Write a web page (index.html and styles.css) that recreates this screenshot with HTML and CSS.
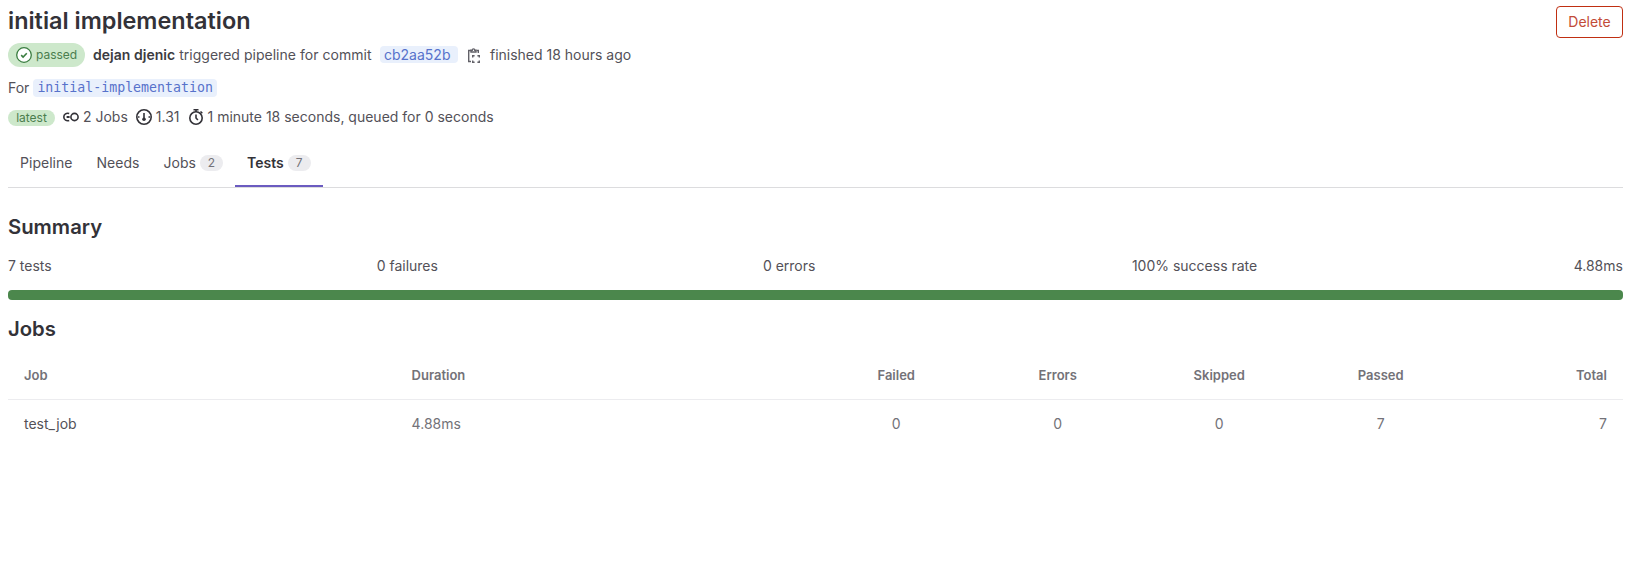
FILE: index.html
```html
<!DOCTYPE html>
<html lang="en">
<head>
<meta charset="utf-8">
<title>initial implementation</title>
<link rel="stylesheet" href="styles.css">
</head>
<body>
<header class="header">
  <h1 class="title">initial implementation</h1>
  <button class="delete">Delete</button>
</header>
<div class="commit-row">
  <span class="status">
    <svg width="16" height="16" viewBox="0 0 16 16" fill="none" stroke="currentColor"><circle cx="8" cy="8" r="7.3" fill="#fff" stroke-width="1.3"/><path d="M5.200 8.100l1.900 1.900 3.700-3.700" stroke-width="1.600"/></svg>
    <span>passed</span>
  </span>
  <span class="trigger"><strong>dejan djenic</strong> triggered pipeline for commit</span>
  <span class="sha">cb2aa52b</span>
  <svg class="copy" width="16" height="18" viewBox="0 0 16 18" fill="none" stroke="currentColor" stroke-width="1.400"><path d="M4 3.500H1.700v11H4M9.500 3.500h1.800V6"/><path d="M4 5V3.200h1.200a1.300 1.300 0 0 1 2.600 0H9V5z"/><path d="M5.700 10.500V8.700h1.900M10.400 8.700h1.900v1.800M12.300 13.500v1.800h-1.900M7.600 15.300H5.700v-1.800"/></svg>
  <span class="finished">finished 18 hours ago</span>
</div>
<div class="ref-row"><span>For</span><code class="ref">initial-implementation</code></div>
<div class="meta-row">
  <span class="latest">latest</span>
  <span class="meta jobs"><svg width="16" height="16" viewBox="0 0 16 16" fill="none" stroke="currentColor" stroke-width="1.600"><circle cx="11.500" cy="8" r="3.600"/><path d="M6.200 4.600C3.500 3.700.800 5.200.800 8s2.700 4.300 5.400 3.400"/><path d="M3.600 8h3" stroke-width="2"/></svg><span>2 Jobs</span></span>
  <span class="meta usage"><svg width="16" height="16" viewBox="0 0 16 16" fill="none" stroke="currentColor" stroke-width="1.600"><circle cx="8" cy="8" r="7.200"/><path d="M8 4v6M2 8h1.500M12.500 8H14"/><circle cx="8" cy="10.300" r="1.800" fill="currentColor" stroke="none"/></svg><span>1.31</span></span>
  <span class="meta time"><svg width="16" height="16" viewBox="0 0 16 16" fill="none" stroke="currentColor" stroke-width="1.600"><circle cx="8" cy="9" r="6.200"/><path d="M5.500.800h5M8 1v2M8 5.500V9l1.900 2M12.500 2.500l1.800 1.800"/></svg><span>1 minute 18 seconds, queued for 0 seconds</span></span>
</div>
<nav class="tabs">
  <a class="tab">Pipeline</a>
  <a class="tab">Needs</a>
  <a class="tab">Jobs<span class="count">2</span></a>
  <a class="tab active">Tests<span class="count">7</span></a>
</nav>
<h2 class="section summary-title">Summary</h2>
<div class="summary"><span class="wide">7 tests</span><span class="wide">0 failures</span><span>0 errors</span><span>100% success rate</span><span>4.88ms</span></div>
<div class="progress"></div>
<h2 class="section">Jobs</h2>
<div class="table">
  <div class="row head"><span>Job</span><span>Duration</span><span class="num">Failed</span><span class="num">Errors</span><span class="num">Skipped</span><span class="num">Passed</span><span class="total">Total</span></div>
  <div class="row body-row"><span class="name">test_job</span><span>4.88ms</span><span class="num">0</span><span class="num">0</span><span class="num">0</span><span class="num">7</span><span class="total">7</span></div>
</div>
</body>
</html>
```
FILE: styles.css
```css
* { box-sizing: border-box; }
body {
  margin: 0;
  padding: 6px 11px 0 8px;
  background: #fff;
  color: #535158;
  font: 14px/20px Inter, "Liberation Sans", sans-serif;
}
svg { display: block; flex: none; }
.header { display: flex; justify-content: space-between; height: 37px; }
.title { margin: 0; font-size: 23.450px; line-height: 30px; font-weight: 600; color: #333238; }
.delete {
  height: 32px; width: 67px; padding: 0; border: 1px solid #c02f12; border-radius: 4px;
  background: #fff; color: #c24b38; font: inherit;
}
.commit-row { display: flex; align-items: center; height: 24px; }
.status {
  display: flex; align-items: center; gap: 4px; height: 24px; width: 77px; padding-left: 8px;
  border-radius: 12px; background: #cde8cb; color: #4b7d4e; font-size: 12px;
}
.status svg { color: #3a7d40; }
.trigger { width: 280px; margin-left: 8px; letter-spacing: 0.025px; white-space: nowrap; }
.trigger strong { font-weight: 600; color: #3c3b41; }
.sha { margin-left: 7px; padding: 0 8px 0 4px; height: 17px; margin-bottom: 1px; line-height: 17px; border-radius: 4px; background: #e9f0fc; color: #5772cb; }
.copy { margin: 2px 0 0 9px; color: #626168; }
.finished { margin-left: 6.5px; }
.ref-row { display: flex; align-items: center; gap: 4px; height: 20px; margin-top: 10px; }
.ref-row span { padding-top: 1px; }
.ref { height: 18px; margin-top: 1px; padding: 0 4px; border-radius: 4px; background: #e9f0fc; color: #5772cb; font: 13.250px/18px "DejaVu Sans Mono", monospace; }
.meta-row { display: flex; align-items: center; height: 20px; margin-top: 10px; }
.latest { width: 47px; height: 16px; margin-top: 2px; border-radius: 8px; background: #cde8cb; color: #4b7d4e; font-size: 12px; line-height: 15px; text-align: center; }
.meta { display: flex; align-items: center; gap: 4px; margin-left: 8px; }
.meta svg { color: #333238; }
.tabs { display: flex; height: 49px; margin-top: 12px; border-bottom: 1px solid #dcdcde; }
.tab { display: flex; align-items: center; gap: 4px; padding: 2px 12px 0; height: 48px; border-bottom: 2px solid transparent; letter-spacing: 0.03px; }
.active { border-color: #6b5bc0; color: #333238; font-weight: 600; }
.count { width: 23px; height: 16px; border-radius: 8px; background: #ececef; color: #737278; font-size: 12px; font-weight: 400; line-height: 16px; text-align: center; }
.section { margin: 15px 0 0; font-size: 20.3px; line-height: 28px; font-weight: 600; color: #333238; }
.summary-title { margin-top: 25px; }
.summary { display: flex; justify-content: space-between; margin-top: 15px; }
.wide { padding-right: 8.5px; }
.progress { height: 10px; margin-top: 14px; border-radius: 4px; background: #4b874c; }
.table { margin-top: 8px; color: #737278; }
.row { display: grid; grid-template-columns: 24% 26% repeat(5, 10%); align-items: center; height: 49px; }
.row span { padding: 0 16px; }
.head { border-bottom: 1px solid #ececef; font-size: 13px; font-weight: 600; }
.body-row { height: 48px; }
.row .name { color: #535158; }
.num { text-align: center; }
.total { text-align: right; }
```
